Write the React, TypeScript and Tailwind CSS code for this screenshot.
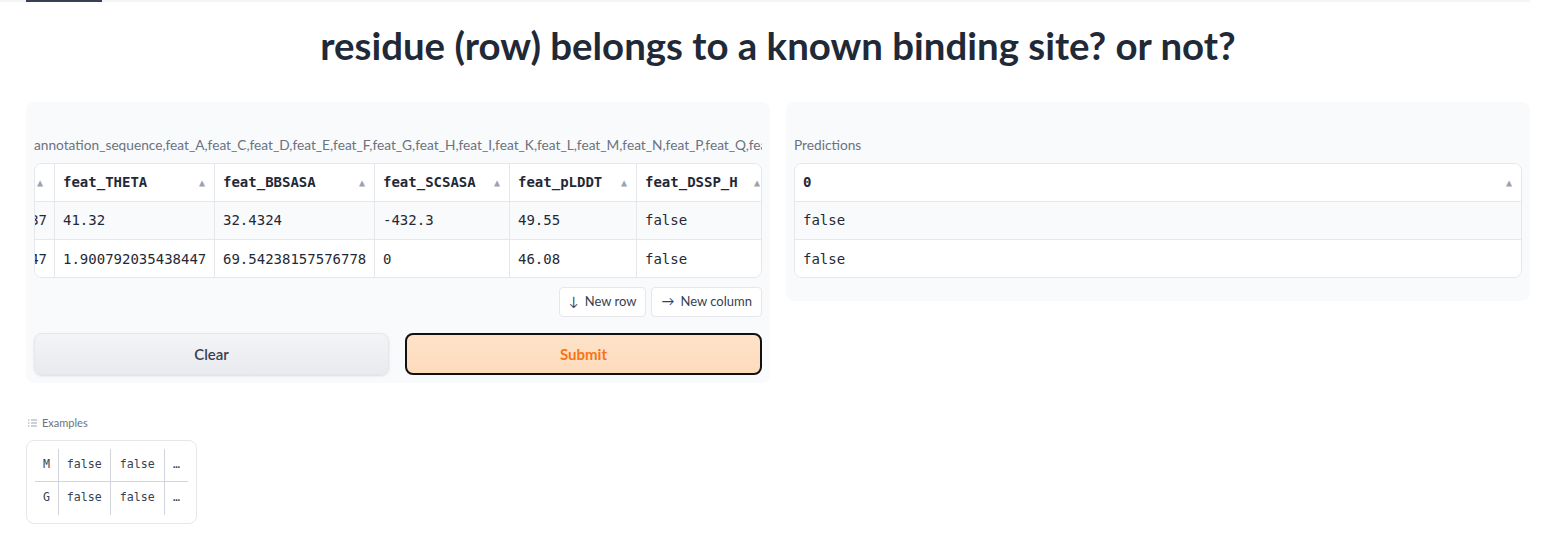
import React from "react";

const SANS = { fontFamily: '"Lato", "Noto Sans", sans-serif' };
const MONO = { fontFamily: '"DejaVu Sans Mono", "Liberation Mono", monospace' };

function Arrow() {
  return <span className="text-[10px] text-[#9ca3af] leading-none">▲</span>;
}

function HeaderCell({ label, w }: { label: string; w: string }) {
  return (
    <div className={`${w} shrink-0 h-full flex items-center justify-between pl-2 pr-[9px] border-r border-[#e5e7eb]`}>
      <span className="font-semibold text-[14px] text-[#1f2937] whitespace-nowrap">{label}</span>
      <Arrow />
    </div>
  );
}

function Cell({ v, w, last }: { v: string; w: string; last?: boolean }) {
  return (
    <div className={`${w} shrink-0 h-full flex items-center pl-2 ${last ? "" : "border-r border-[#e5e7eb]"}`}>
      <span className="text-[14px] text-[#1f2937] whitespace-nowrap">{v}</span>
    </div>
  );
}

const cols = [
  { label: "feat_THETA", w: "w-[160px]" },
  { label: "feat_BBSASA", w: "w-[160px]" },
  { label: "feat_SCSASA", w: "w-[135px]" },
  { label: "feat_pLDDT", w: "w-[127px]" },
  { label: "feat_DSSP_H", w: "w-[133px]" },
];

const rows = [
  { first: "0.37", vals: ["41.32", "32.4324", "-432.3", "49.55", "false"] },
  { first: "0.47", vals: ["1.900792035438447", "69.54238157576778", "0", "46.08", "false"] },
];

function FirstCell({ children, header }: { children: React.ReactNode; header?: boolean }) {
  return (
    <div className={`w-[20px] shrink-0 h-full overflow-hidden flex items-center ${header ? "justify-start pl-[2px]" : "justify-end"} border-r border-[#e5e7eb]`}>
      {children}
    </div>
  );
}

function DataTable() {
  return (
    <div className="h-[115px] rounded-lg border border-[#e5e7eb] overflow-hidden bg-white" style={MONO}>
      <div className="flex h-[38px] bg-white border-b border-[#e5e7eb]">
        <FirstCell header>
          <Arrow />
        </FirstCell>
        {cols.map((c) => (
          <HeaderCell key={c.label} label={c.label} w={c.w} />
        ))}
      </div>
      {rows.map((r, i) => (
        <div key={i} className={`flex h-[38px] ${i === 0 ? "bg-[#f9fafb] border-b border-[#e5e7eb]" : "bg-white"}`}>
          <FirstCell>
            <span className="text-[14px] text-[#1f2937] whitespace-nowrap pr-[7px]">{r.first}</span>
          </FirstCell>
          {r.vals.map((v, j) => (
            <Cell key={j} v={v} w={cols[j].w} last={j === r.vals.length - 1} />
          ))}
        </div>
      ))}
    </div>
  );
}

function PredTable() {
  return (
    <div className="h-[115px] rounded-lg border border-[#e5e7eb] overflow-hidden bg-white" style={MONO}>
      <div className="flex h-[38px] items-center justify-between pl-2 pr-[9px] bg-white border-b border-[#e5e7eb]">
        <span className="font-semibold text-[14px] text-[#1f2937]">0</span>
        <Arrow />
      </div>
      <div className="flex h-[38px] items-center pl-2 bg-[#f9fafb] border-b border-[#e5e7eb]">
        <span className="text-[14px] text-[#1f2937]">false</span>
      </div>
      <div className="flex h-[38px] items-center pl-2 bg-white">
        <span className="text-[14px] text-[#1f2937]">false</span>
      </div>
    </div>
  );
}

export default function App() {
  const header =
    "annotation_sequence,feat_A,feat_C,feat_D,feat_E,feat_F,feat_G,feat_H,feat_I,feat_K,feat_L,feat_M,feat_N,feat_P,feat_Q,feat_R,feat_S,feat_T,feat_V,feat_W,feat_Y";
  return (
    <div className="w-[1568px] h-[552px] bg-white overflow-hidden" style={SANS}>
      <div className="w-[1530px] h-[2px] bg-[#f3f4f6] flex">
        <div className="ml-[26px] w-[76px] h-[2px] bg-[#374151]" />
      </div>
      <div className="px-[26px] w-[1556px]">
        <h1 className="text-center text-[38.4px] font-bold text-[#1f2937] leading-none pt-[24px] h-[100px] whitespace-nowrap">
          residue (row) belongs to a known binding site? or not?
        </h1>
        <div className="flex gap-4 items-start">
          <div className="w-[744px] bg-[#f9fafb] rounded-lg px-2 pt-[33px] pb-2 flex flex-col">
            <div className="text-[13.7px] text-[#6b7280] whitespace-nowrap overflow-hidden h-[20px] leading-[20px] mb-[8px]">
              {header}
            </div>
            <DataTable />
            <div className="flex justify-end gap-[5px] mt-[9px]">
              <button className="h-[30px] px-[9px] flex items-center gap-[6px] bg-white border border-[#e5e7eb] rounded text-[13px] text-[#374151]">
                <span>↓</span>New row
              </button>
              <button className="h-[30px] px-[9px] flex items-center gap-[6px] bg-white border border-[#e5e7eb] rounded text-[13px] text-[#374151]">
                <span>→</span>New column
              </button>
            </div>
            <div className="flex gap-4 mt-[16px]">
              <button className="flex-1 h-[42px] rounded-lg border border-[#e5e7eb] bg-gradient-to-b from-[#f3f4f6] to-[#e9eaee] text-[15px] font-semibold text-[#374151] shadow-sm">
                Clear
              </button>
              <button className="flex-1 h-[42px] rounded-lg border-2 border-[#111111] bg-gradient-to-b from-[#fee2c8] to-[#fddcbc] text-[15px] font-bold text-[#f97316]">
                Submit
              </button>
            </div>
          </div>
          <div className="w-[744px] bg-[#f9fafb] rounded-lg px-2 pt-[33px] pb-[23px] flex flex-col">
            <div className="text-[13.7px] text-[#6b7280] h-[20px] leading-[20px] mb-[8px]">Predictions</div>
            <PredTable />
          </div>
        </div>
        <div className="mt-[32px] flex items-center gap-[5px] text-[11px] text-[#6b7280] pl-[2px]">
          <svg width="9" height="8" viewBox="0 0 9 8" fill="none" stroke="#9ca3af" strokeWidth="1">
            <line x1="0" y1="1" x2="1.5" y2="1" />
            <line x1="3" y1="1" x2="9" y2="1" />
            <line x1="0" y1="4" x2="1.5" y2="4" />
            <line x1="3" y1="4" x2="9" y2="4" />
            <line x1="0" y1="7" x2="1.5" y2="7" />
            <line x1="3" y1="7" x2="9" y2="7" />
          </svg>
          <span>Examples</span>
        </div>
        <div className="mt-[8px] w-[171px] h-[84px] rounded-lg border border-[#e5e7eb] bg-white px-[8px] py-[8px]" style={MONO}>
          {["M", "G"].map((l, i) => (
            <div key={l} className={`flex h-[33px] items-center text-[11.6px] text-[#374151] ${i === 0 ? "border-b border-[#d1d5db]" : ""}`}>
              <div className="w-[24px] h-full flex items-center justify-center border-r border-[#d1d5db]">{l}</div>
              <div className="w-[52px] h-full flex items-center justify-center border-r border-[#d1d5db]">false</div>
              <div className="w-[55px] h-full flex items-center justify-center border-r border-[#d1d5db]">false</div>
              <div className="w-[23px] h-full flex items-center justify-center">…</div>
            </div>
          ))}
        </div>
      </div>
    </div>
  );
}
